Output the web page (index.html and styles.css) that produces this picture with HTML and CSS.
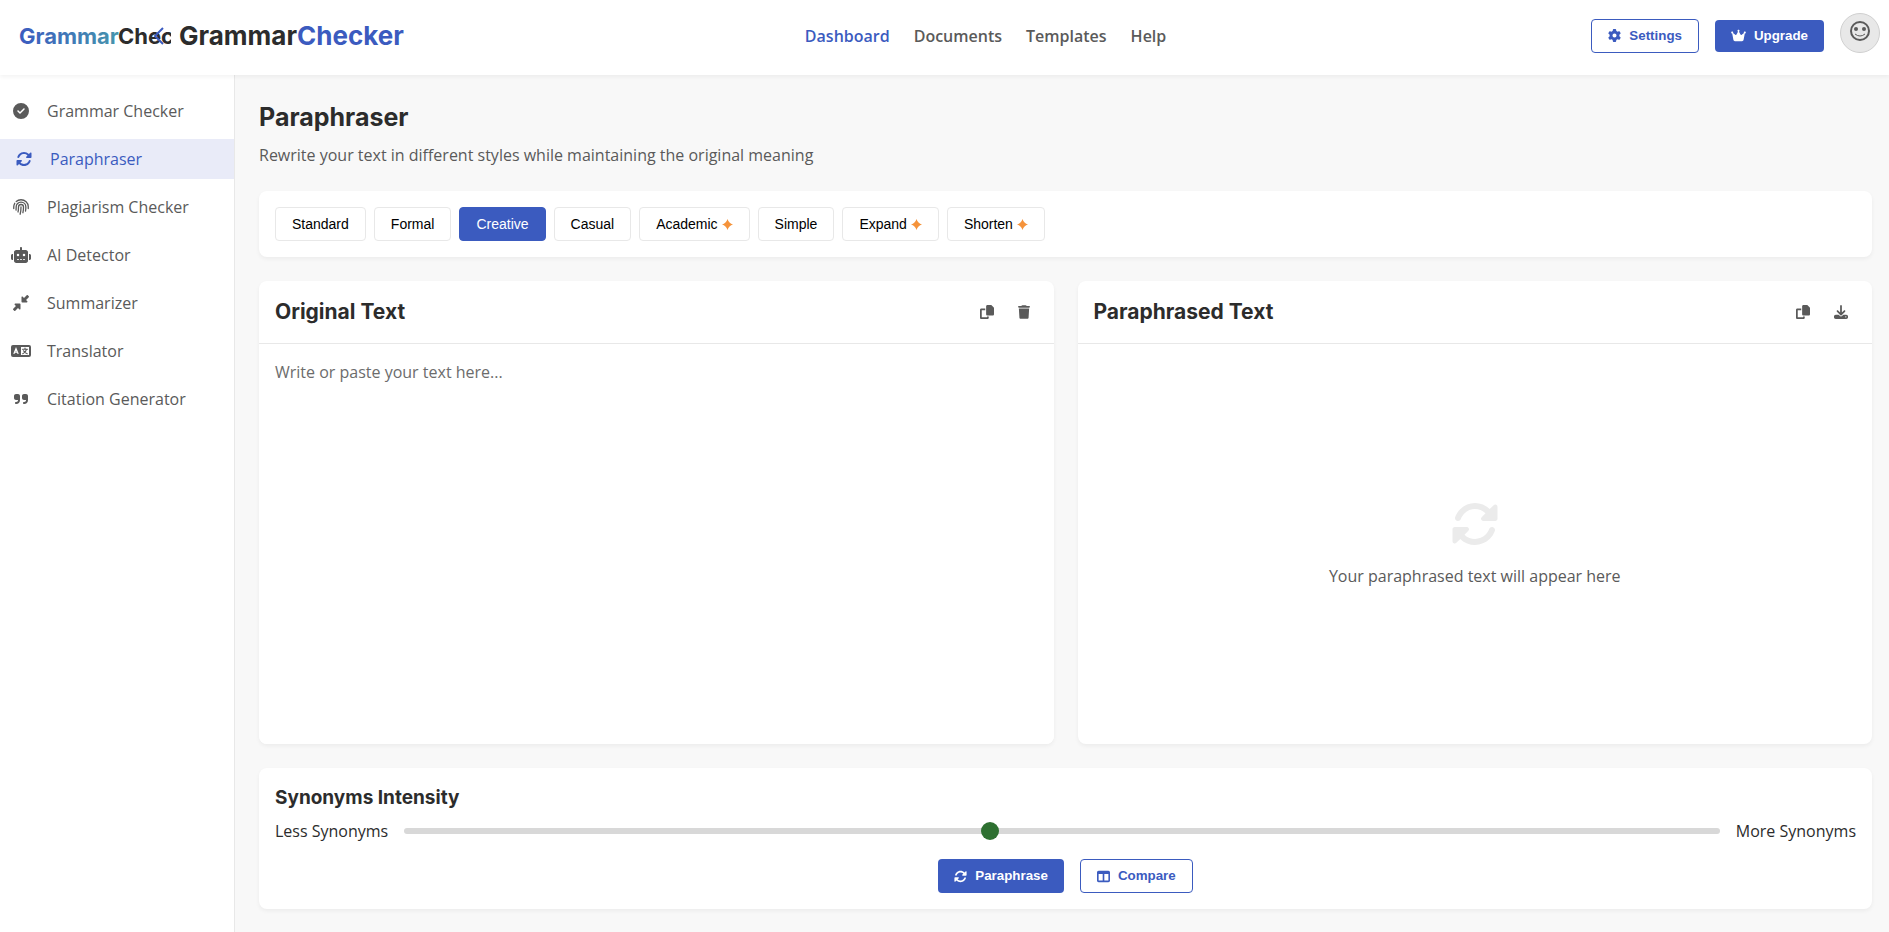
FILE: index.html
```html
<!DOCTYPE html>
<html lang="en">
<head>
    <meta charset="UTF-8">
    <meta name="viewport" content="width=device-width, initial-scale=1.0">
    <title>Paraphraser - GrammarChecker</title>
    <link rel="stylesheet" href="styles.css">
</head>
<body>
    <!-- Shared icons -->
    <svg class="icon-defs" aria-hidden="true">
        <symbol id="icon-sync" viewBox="0 0 512 512"><path d="M142.9 142.9c-17.5 17.5-30.1 38-37.8 59.8c-5.9 16.7-24.2 25.4-40.8 19.5s-25.4-24.2-19.5-40.8C55.6 150.7 73.2 122 97.6 97.6c87.2-87.2 228.3-87.5 315.8-1L455 55c6.9-6.9 17.2-8.9 26.2-5.2s14.8 12.5 14.8 22.2l0 128c0 13.3-10.7 24-24 24l-8.4 0L344 224c-9.7 0-18.5-5.8-22.2-14.8s-1.7-19.3 5.2-26.2l41.1-41.1c-62.6-61.5-163.1-61.2-225.3 1zM16 312c0-13.3 10.7-24 24-24l7.6 0 .7 0L168 288c9.7 0 18.5 5.8 22.2 14.8s1.7 19.3-5.2 26.2l-41.1 41.1c62.6 61.5 163.1 61.2 225.3-1c17.5-17.5 30.1-38 37.8-59.8c5.9-16.7 24.2-25.4 40.8-19.5s25.4 24.2 19.5 40.8c-10.8 30.6-28.4 59.3-52.9 83.8c-87.2 87.2-228.3 87.5-315.8 1L57 457c-6.9 6.9-17.2 8.9-26.2 5.2S16 449.7 16 440l0-119.6 0-.7 0-7.6z"/></symbol>
        <symbol id="icon-copy" viewBox="0 0 512 512"><path d="M272 0H396.1c12.7 0 24.9 5.1 33.9 14.1l67.9 67.9c9 9 14.1 21.2 14.1 33.9V336c0 26.5-21.5 48-48 48H272c-26.5 0-48-21.5-48-48V48c0-26.5 21.5-48 48-48zM48 128H192v64H64V448H256V416h64v48c0 26.5-21.5 48-48 48H48c-26.5 0-48-21.5-48-48V176c0-26.5 21.5-48 48-48z"/></symbol>
        <symbol id="icon-star" viewBox="0 0 16 16"><path d="M8 0Q10 6 16 8Q10 10 8 16Q6 10 0 8Q6 6 8 0z"/></symbol>
    </svg>

    <header class="header">
        <a href="#" class="logo" aria-label="GrammarChecker home">
            <svg class="logo-image" viewBox="0 0 152 40">
                <defs>
                    <linearGradient id="logoGradient" x1="0" y1="0" x2="1" y2="0">
                        <stop offset="0" stop-color="#3b5bc0"/>
                        <stop offset="1" stop-color="#4695ad"/>
                    </linearGradient>
                </defs>
                <text x="0" y="28" fill="url(#logoGradient)">Grammar</text>
                <text x="99" y="28" fill="#2c2c2c">Chec</text>
                <path class="stroked" d="M144 12L136 20L144 28" stroke="#3b5bc0" stroke-width="2"/>
            </svg>
            <span class="logo-text">Grammar<span>Checker</span></span>
        </a>
        <nav class="main-nav">
            <a href="#" class="active">Dashboard</a>
            <a href="#">Documents</a>
            <a href="#">Templates</a>
            <a href="#">Help</a>
        </nav>
        <div class="user-actions">
            <button type="button" class="btn btn-outline">
                <svg class="btn-icon" viewBox="0 0 512 512"><path d="M495.9 166.6c3.2 8.7 .5 18.4-6.4 24.6l-43.3 39.4c1.1 8.3 1.7 16.8 1.7 25.4s-.6 17.1-1.7 25.4l43.3 39.4c6.9 6.2 9.6 15.9 6.4 24.6c-4.4 11.9-9.7 23.3-15.8 34.3l-4.7 8.1c-6.6 11-14 21.4-22.1 31.2c-5.9 7.2-15.7 9.6-24.5 6.8l-55.7-17.7c-13.4 10.3-28.2 18.9-44 25.4l-12.5 57.1c-2 9.1-9 16.3-18.2 17.8c-13.8 2.3-28 3.5-42.5 3.5s-28.7-1.2-42.5-3.5c-9.2-1.5-16.2-8.7-18.2-17.8l-12.5-57.1c-15.8-6.5-30.6-15.1-44-25.4L83.1 425.9c-8.8 2.8-18.6 .3-24.5-6.8c-8.1-9.8-15.5-20.2-22.1-31.2l-4.7-8.1c-6.1-11-11.4-22.4-15.8-34.3c-3.2-8.7-.5-18.4 6.4-24.6l43.3-39.4C64.6 273.1 64 264.6 64 256s.6-17.1 1.7-25.4L22.4 191.2c-6.9-6.2-9.6-15.9-6.4-24.6c4.4-11.9 9.7-23.3 15.8-34.3l4.7-8.1c6.6-11 14-21.4 22.1-31.2c5.9-7.2 15.7-9.6 24.5-6.8l55.7 17.7c13.4-10.3 28.2-18.9 44-25.4l12.5-57.1c2-9.1 9-16.3 18.2-17.8C227.3 1.2 241.5 0 256 0s28.7 1.2 42.5 3.5c9.2 1.5 16.2 8.7 18.2 17.8l12.5 57.1c15.8 6.5 30.6 15.1 44 25.4l55.7-17.7c8.8-2.8 18.6-.3 24.5 6.8c8.1 9.8 15.5 20.2 22.1 31.2l4.7 8.1c6.1 11 11.4 22.4 15.8 34.3zM256 336a80 80 0 1 0 0-160 80 80 0 1 0 0 160z"/></svg>
                Settings
            </button>
            <button type="button" class="btn btn-primary">
                <svg class="btn-icon wide" viewBox="0 0 576 512"><path d="M309 106c11.4-7 19-19.7 19-34c0-22.1-17.9-40-40-40s-40 17.9-40 40c0 14.4 7.6 27 19 34L209.7 220.6c-9.1 18.2-32.7 23.4-48.6 10.7L72 160c5-6.7 8-15 8-24c0-22.1-17.9-40-40-40S0 113.9 0 136s17.9 40 40 40c.2 0 .5 0 .7 0L86.4 427.4c5.5 30.4 32 52.6 63 52.6H426.6c30.9 0 57.4-22.1 63-52.6L535.3 176c.2 0 .5 0 .7 0c22.1 0 40-17.9 40-40s-17.9-40-40-40s-40 17.9-40 40c0 9 3 17.3 8 24l-89.1 71.3c-15.9 12.7-39.5 7.5-48.6-10.7L309 106z"/></svg>
                Upgrade
            </button>
            <button type="button" class="avatar" aria-label="Profile">
                <svg viewBox="0 0 20 20">
                    <circle class="stroked" cx="10" cy="10" r="9" stroke-width="2"/>
                    <circle cx="6" cy="8" r="2"/>
                    <circle cx="14" cy="8" r="2"/>
                    <path class="stroked" d="M5 13Q10 17 15 13"/>
                </svg>
            </button>
        </div>
    </header>

    <div class="layout">
        <aside class="sidebar">
            <a href="#" class="sidebar-item">
                <svg class="sidebar-icon" viewBox="0 0 512 512"><path d="M256 512A256 256 0 1 0 256 0a256 256 0 1 0 0 512zM369 209L241 337c-9.4 9.4-24.6 9.4-33.9 0l-64-64c-9.4-9.4-9.4-24.6 0-33.9s24.6-9.4 33.9 0l47 47L335 175c9.4-9.4 24.6-9.4 33.9 0s9.4 24.6 0 33.9z"/></svg>
                <span>Grammar Checker</span>
            </a>
            <a href="#" class="sidebar-item active">
                <svg class="sidebar-icon"><use href="#icon-sync"/></svg>
                <span>Paraphraser</span>
            </a>
            <a href="#" class="sidebar-item">
                <svg class="sidebar-icon stroked" viewBox="0 0 32 32" stroke-width="2.6" stroke-linecap="round">
                    <path d="M1.5 19V16C1.5 13 2.3 10.5 3.5 8.6M6.5 5C9 2.6 12.2 1.500 16 1.500C24 1.500 30.500 8 30.500 15V19"/>
                    <path d="M6 22C6.4 20 6.3 18 6.3 16C6.3 10.5 10.5 6.3 16 6.3C21.5 6.3 25.7 10.5 25.7 16C25.7 19 25.6 21.5 25 24"/>
                    <path d="M10 26C11 22.5 11 19.5 11 16C11 13 13 11 16 11C19 11 21 13 21 16C21 20.5 20.8 24 19.8 27.5"/>
                    <path d="M16 16C16 21.5 15.8 26 14.2 30.5"/>
                </svg>
                <span>Plagiarism Checker</span>
            </a>
            <a href="#" class="sidebar-item">
                <svg class="sidebar-icon" viewBox="0 0 640 512"><path d="M320 0c17.7 0 32 14.3 32 32V96H472c39.8 0 72 32.2 72 72V440c0 39.8-32.2 72-72 72H168c-39.8 0-72-32.2-72-72V168c0-39.8 32.2-72 72-72H288V32c0-17.7 14.3-32 32-32zM208 384c-8.8 0-16 7.2-16 16s7.2 16 16 16h32c8.8 0 16-7.2 16-16s-7.2-16-16-16H208zm96 0c-8.8 0-16 7.2-16 16s7.2 16 16 16h32c8.8 0 16-7.2 16-16s-7.2-16-16-16H304zm96 0c-8.8 0-16 7.2-16 16s7.2 16 16 16h32c8.8 0 16-7.2 16-16s-7.2-16-16-16H400zM264 256a40 40 0 1 0 -80 0 40 40 0 1 0 80 0zm152 40a40 40 0 1 0 0-80 40 40 0 1 0 0 80zM48 224H64V416H48c-26.5 0-48-21.5-48-48V272c0-26.5 21.5-48 48-48zm544 0c26.5 0 48 21.5 48 48v96c0 26.5-21.5 48-48 48H576V224h16z"/></svg>
                <span>AI Detector</span>
            </a>
            <a href="#" class="sidebar-item">
                <svg class="sidebar-icon" viewBox="0 0 512 512"><path d="M439 7c9.4-9.4 24.6-9.4 33.9 0l32 32c9.4 9.4 9.4 24.6 0 33.9l-87 87 39 39c6.9 6.9 8.9 17.2 5.2 26.2s-12.5 14.8-22.2 14.8H296c-13.3 0-24-10.7-24-24V72c0-9.7 5.8-18.5 14.8-22.2s19.3-1.7 26.2 5.2l39 39L439 7zM72 272H216c13.3 0 24 10.7 24 24V440c0 9.7-5.8 18.5-14.8 22.2s-19.3 1.7-26.2-5.2l-39-39L73 505c-9.4 9.4-24.6 9.4-33.9 0L7 473c-9.4-9.4-9.4-24.6 0-33.9l87-87L55 313c-6.9-6.9-8.9-17.2-5.2-26.2s12.5-14.8 22.2-14.8z"/></svg>
                <span>Summarizer</span>
            </a>
            <a href="#" class="sidebar-item">
                <svg class="sidebar-icon" viewBox="0 0 640 512">
                    <rect y="64" width="640" height="384" rx="64"/>
                    <rect x="320" y="128" width="256" height="256" fill="#fff"/>
                    <g class="stroked" stroke-width="38" stroke-linecap="round">
                        <path stroke="#fff" d="M96 336L160 180L224 336M122 294H198"/>
                        <path d="M448 164V196M368 200H528M496 204C480 270 430 320 376 344M400 250C430 300 470 330 520 344"/>
                    </g>
                </svg>
                <span>Translator</span>
            </a>
            <a href="#" class="sidebar-item">
                <svg class="sidebar-icon" viewBox="0 0 448 512"><path d="M448 296c0 66.3-53.7 120-120 120h-8c-17.7 0-32-14.3-32-32s14.3-32 32-32h8c30.9 0 56-25.1 56-56v-8H320c-35.3 0-64-28.7-64-64V160c0-35.3 28.7-64 64-64h64c35.3 0 64 28.7 64 64v136zm-256 0c0 66.3-53.7 120-120 120H64c-17.7 0-32-14.3-32-32s14.3-32 32-32h8c30.9 0 56-25.1 56-56v-8H64c-35.3 0-64-28.7-64-64V160c0-35.3 28.7-64 64-64h64c35.3 0 64 28.7 64 64v136z"/></svg>
                <span>Citation Generator</span>
            </a>
        </aside>

        <main class="content">
            <div class="page-header">
                <h1>Paraphraser</h1>
                <p>Rewrite your text in different styles while maintaining the original meaning</p>
            </div>

            <div class="card modes">
                <button type="button" class="mode">Standard</button>
                <button type="button" class="mode">Formal</button>
                <button type="button" class="mode active">Creative</button>
                <button type="button" class="mode">Casual</button>
                <button type="button" class="mode">Academic <svg class="star"><use href="#icon-star"/></svg></button>
                <button type="button" class="mode">Simple</button>
                <button type="button" class="mode">Expand <svg class="star"><use href="#icon-star"/></svg></button>
                <button type="button" class="mode">Shorten <svg class="star"><use href="#icon-star"/></svg></button>
            </div>

            <div class="panels">
                <section class="card panel">
                    <div class="panel-header">
                        <h2><label for="originalText">Original Text</label></h2>
                        <div class="panel-actions">
                            <button type="button" class="icon-btn" id="copyOriginal" aria-label="Copy"><svg><use href="#icon-copy"/></svg></button>
                            <button type="button" class="icon-btn" id="clearOriginal" aria-label="Clear"><svg class="narrow" viewBox="0 0 448 512"><path d="M135.2 17.7L128 32H32C14.3 32 0 46.3 0 64S14.3 96 32 96H416c17.7 0 32-14.3 32-32s-14.3-32-32-32H320l-7.2-14.3C307.4 6.8 296.3 0 284.2 0H163.8c-12.1 0-23.2 6.8-28.6 17.7zM416 128H32L53.2 467c1.6 25.3 22.6 45 47.9 45H346.9c25.3 0 46.3-19.7 47.9-45L416 128z"/></svg></button>
                        </div>
                    </div>
                    <textarea id="originalText" placeholder="Write or paste your text here..."></textarea>
                </section>

                <section class="card panel">
                    <div class="panel-header">
                        <h2>Paraphrased Text</h2>
                        <div class="panel-actions">
                            <button type="button" class="icon-btn" aria-label="Copy"><svg><use href="#icon-copy"/></svg></button>
                            <button type="button" class="icon-btn" aria-label="Download"><svg viewBox="0 0 512 512"><path d="M288 32c0-17.7-14.3-32-32-32s-32 14.3-32 32V274.7l-73.4-73.4c-12.5-12.5-32.8-12.5-45.3 0s-12.5 32.8 0 45.3l128 128c12.5 12.5 32.8 12.5 45.3 0l128-128c12.5-12.5 12.5-32.8 0-45.3s-32.8-12.5-45.3 0L288 274.7V32zM64 352c-35.3 0-64 28.7-64 64v32c0 35.3 28.7 64 64 64H448c35.3 0 64-28.7 64-64V416c0-35.3-28.7-64-64-64H346.5l-45.3 45.3c-25 25-65.5 25-90.5 0L165.5 352H64zm368 56a24 24 0 1 1 0 48 24 24 0 1 1 0-48z"/></svg></button>
                        </div>
                    </div>
                    <div class="output">
                        <svg class="output-icon"><use href="#icon-sync"/></svg>
                        <p>Your paraphrased text will appear here</p>
                    </div>
                </section>
            </div>

            <section class="card controls">
                <h3><label for="intensity">Synonyms Intensity</label></h3>
                <div class="slider-row">
                    <span>Less Synonyms</span>
                    <input type="range" id="intensity" min="1" max="10" value="5">
                    <span>More Synonyms</span>
                </div>
                <div class="control-buttons">
                    <button type="button" class="btn btn-primary">
                        <svg class="btn-icon"><use href="#icon-sync"/></svg>
                        Paraphrase
                    </button>
                    <button type="button" class="btn btn-outline">
                        <svg class="btn-icon" viewBox="0 0 512 512"><path d="M0 96C0 60.7 28.7 32 64 32H448c35.3 0 64 28.7 64 64V416c0 35.3-28.7 64-64 64H64c-35.3 0-64-28.7-64-64V96zm64 64V416H224V160H64zm384 0H288V416H448V160z"/></svg>
                        Compare
                    </button>
                </div>
            </section>
        </main>
    </div>

    <script>
        // Style selection
        const modes = document.querySelectorAll('.mode');
        modes.forEach(mode => {
            mode.addEventListener('click', () => {
                modes.forEach(m => m.classList.remove('active'));
                mode.classList.add('active');
            });
        });

        const originalText = document.getElementById('originalText');

        document.getElementById('copyOriginal').addEventListener('click', () => {
            navigator.clipboard.writeText(originalText.value);
        });

        document.getElementById('clearOriginal').addEventListener('click', () => {
            originalText.value = '';
        });
    </script>
</body>
</html>
```
FILE: styles.css
```css
:root {
    --primary: #3b5bbf;
    --text: #2c2c2c;
    --text-light: #5a5a5a;
    --border: #e8e8e8;
    --background: #f8f8f8;
}

* {
    margin: 0;
    padding: 0;
    box-sizing: border-box;
}

body {
    min-height: 100vh;
    display: flex;
    flex-direction: column;
    font-family: 'Open Sans', sans-serif;
    font-size: 16px;
    line-height: 24px;
    color: var(--text);
    background: var(--background);
}

a {
    text-decoration: none;
}

button {
    font-family: 'Liberation Sans', Arial, sans-serif;
    cursor: pointer;
}

svg {
    fill: currentColor;
    flex-shrink: 0;
}

.stroked {
    fill: none;
}

svg.stroked,
.sidebar-icon g.stroked,
.avatar .stroked {
    stroke: currentColor;
}

h1, h2, h3, .logo-text {
    font-family: 'Inter', sans-serif;
    font-weight: 700;
}

.icon-defs {
    display: none;
}

/* Header */
.header {
    position: relative;
    z-index: 10;
    display: flex;
    align-items: center;
    height: 75px;
    padding: 0 9px 4px 19px;
    background: white;
    box-shadow: 0 2px 4px rgba(0, 0, 0, 0.05);
}

.logo {
    display: flex;
    align-items: center;
    gap: 8px;
    color: var(--text);
}

.logo-image {
    width: 152px;
    height: 40px;
    font-family: 'Inter', sans-serif;
    font-size: 22px;
    font-weight: 700;
}

.logo-text {
    font-size: 26px;
}

.logo-text span {
    color: var(--primary);
}

.main-nav {
    flex: 1;
    display: flex;
    justify-content: center;
    gap: 24px;
    padding-right: 24px;
}

.main-nav a {
    color: var(--text-light);
    font-weight: 600;
}

.main-nav a.active {
    color: var(--primary);
}

.user-actions {
    display: flex;
    align-items: center;
    gap: 16px;
}

.btn {
    display: inline-flex;
    align-items: center;
    gap: 8px;
    padding: 8px 16px;
    border: none;
    border-radius: 4px;
    line-height: 16px;
    font-weight: 700;
}

.btn-primary {
    background: var(--primary);
    color: white;
}

.btn-outline {
    background: white;
    color: var(--primary);
    border: 1px solid var(--primary);
}

.btn-icon {
    width: 13px;
    height: 13px;
}

.btn-icon.wide {
    width: 15px;
}

.avatar {
    display: flex;
    justify-content: center;
    width: 40px;
    height: 40px;
    padding-top: 7px;
    margin-bottom: 5px;
    border: 1px solid #d0d0d0;
    border-radius: 50%;
    background: #e8e8e8;
    color: var(--text-light);
}

.avatar svg {
    width: 20px;
    height: 20px;
}

/* Sidebar */
.layout {
    flex: 1;
    display: flex;
}

.sidebar {
    display: flex;
    flex-direction: column;
    gap: 8px;
    width: 235px;
    flex-shrink: 0;
    padding-top: 16px;
    background: white;
    border-right: 1px solid var(--border);
}

.sidebar-item {
    display: flex;
    align-items: center;
    gap: 16px;
    padding: 8px 11px;
    color: var(--text-light);
}

.sidebar-item.active {
    padding-left: 14px;
    background: #e9ebf8;
    color: var(--primary);
}

.sidebar-icon {
    width: 20px;
    height: 16px;
}

/* Content */
.content {
    flex: 1;
    min-width: 0;
    display: flex;
    flex-direction: column;
    gap: 24px;
    padding: 24px 17px 24px 24px;
}

.page-header {
    display: flex;
    flex-direction: column;
    gap: 8px;
}

.page-header h1 {
    font-size: 25px;
    line-height: 36px;
}

.page-header p {
    color: var(--text-light);
}

.card {
    background: white;
    border-radius: 8px;
    box-shadow: 0 2px 4px rgba(0, 0, 0, 0.05);
}

.modes {
    display: flex;
    flex-wrap: wrap;
    gap: 8px;
    padding: 16px;
}

.mode {
    display: inline-flex;
    align-items: center;
    gap: 4px;
    padding: 8px 16px;
    border: 1px solid var(--border);
    border-radius: 4px;
    background: white;
    color: black;
    font-size: 14px;
    line-height: 16px;
}

.mode.active {
    background: var(--primary);
    border-color: var(--primary);
    color: white;
}

.star {
    width: 11px;
    height: 11px;
    color: #f5933b;
}

.panels {
    flex: 1;
    display: grid;
    grid-template-columns: 1fr 1fr;
    gap: 24px;
}

.panel {
    display: flex;
    flex-direction: column;
    min-height: 463px;
    overflow: hidden;
}

.panel-header {
    display: flex;
    justify-content: space-between;
    align-items: center;
    padding: 16px;
    border-bottom: 1px solid var(--border);
}

.panel-header h2 {
    font-size: 21px;
    line-height: 30px;
}

.panel-actions {
    display: flex;
    gap: 8px;
}

.icon-btn {
    display: flex;
    padding: 7px 8px;
    border: none;
    background: none;
    color: var(--text-light);
}

.icon-btn svg {
    width: 14px;
    height: 14px;
}

.icon-btn .narrow {
    width: 12px;
}

textarea {
    flex: 1;
    width: 100%;
    padding: 16px;
    border: none;
    outline: none;
    resize: none;
    font: inherit;
    color: var(--text);
}

textarea::placeholder {
    color: #6c6c6c;
}

.output {
    flex: 1;
    display: flex;
    flex-direction: column;
    justify-content: center;
    align-items: center;
    gap: 16px;
    color: var(--text-light);
}

.output-icon {
    width: 48px;
    height: 48px;
    color: #ebebeb;
}

/* Controls */
.controls {
    padding: 16px;
}

.controls h3 {
    font-size: 19px;
    line-height: 27px;
    margin-bottom: 8px;
}

.slider-row {
    display: flex;
    align-items: center;
    gap: 16px;
    margin-bottom: 16px;
}

.slider-row input {
    flex: 1;
    height: 6px;
    appearance: none;
    border-radius: 3px;
    background: #d8d8d8;
}

.slider-row input::-webkit-slider-thumb {
    appearance: none;
    width: 18px;
    height: 18px;
    border-radius: 50%;
    background: #2e7031;
}

.control-buttons {
    display: flex;
    justify-content: center;
    gap: 16px;
}
```
